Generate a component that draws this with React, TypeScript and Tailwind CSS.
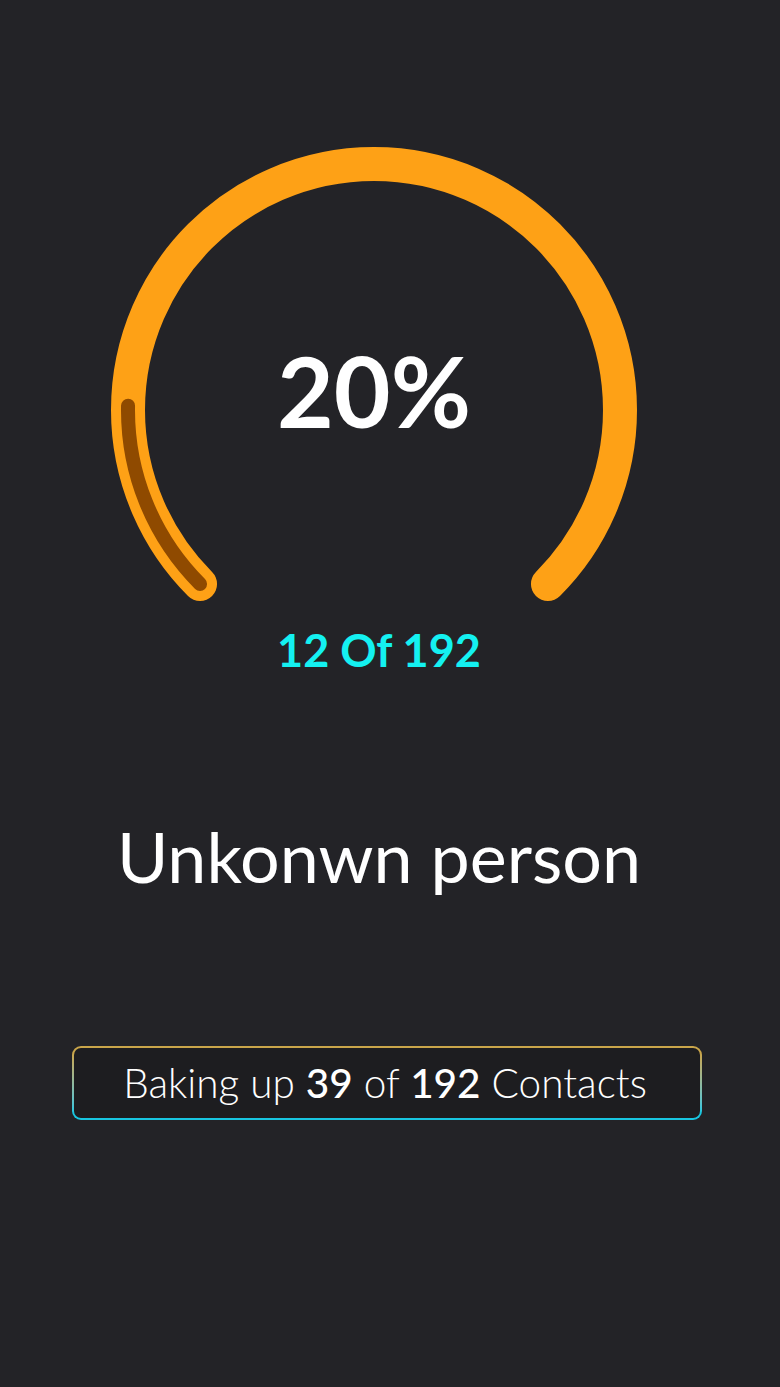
const ORANGE = '#fea116';
const DARK = '#8f4a00';

function Gauge() {
  const cx = 374;
  const cy = 270;
  const r = 246;
  const pt = (deg: number) => {
    const a = (deg * Math.PI) / 180;
    return [cx + r * Math.cos(a), cy + r * Math.sin(a)];
  };
  const [sx, sy] = pt(135);
  const [ex, ey] = pt(45);
  const [px, py] = pt(181);

  return (
    <div className="relative h-[470px] w-full">
      <svg width="780" height="470" viewBox="0 0 780 470" className="block">
        <path
          d={`M ${sx} ${sy} A ${r} ${r} 0 1 1 ${ex} ${ey}`}
          fill="none"
          stroke={ORANGE}
          strokeWidth={34}
          strokeLinecap="round"
        />
        <path
          d={`M ${sx} ${sy} A ${r} ${r} 0 0 1 ${px} ${py}`}
          fill="none"
          stroke={DARK}
          strokeWidth={14}
          strokeLinecap="round"
        />
      </svg>
      <div className="absolute left-[174px] top-[201px] w-[400px] text-center text-[98px] font-bold leading-none text-white">
        20%
      </div>
    </div>
  );
}

export default function App() {
  return (
    <div
      className="flex min-h-[1387px] w-full flex-col items-center bg-[#232327] pt-[140px]"
      style={{ fontFamily: 'Lato, "Noto Sans", sans-serif' }}
    >
      <Gauge />
      <p className="mt-[18px] mr-[22px] text-[45px] font-bold leading-none text-[#14f1f1]">12 Of 192</p>
      <h1 className="mt-[148px] mr-[22px] text-[70px] font-normal leading-none text-white">Unkonwn person</h1>
      <div className="mt-[155px] ml-[-6px] w-[630px] rounded-[9px] bg-gradient-to-b from-[#c9a54a] from-10% to-[#18c6e0] to-90% p-[2px]">
        <div className="flex h-[70px] items-center justify-center rounded-[7px] bg-[#1d1d20] pr-[4px] text-[40.5px] font-light text-white">
          <span>
            Baking up <span className="font-medium">39</span> of <span className="font-medium">192</span> Contacts
          </span>
        </div>
      </div>
    </div>
  );
}
